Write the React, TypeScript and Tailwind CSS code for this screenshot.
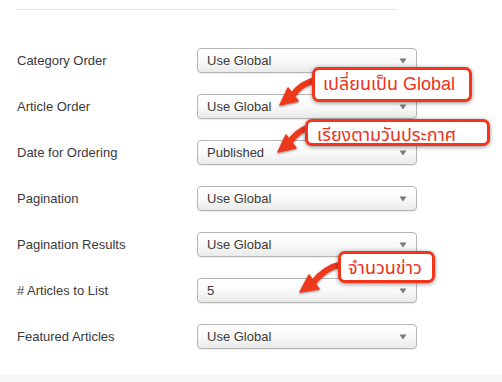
import React from 'react'

const rows = [
  { label: 'Category Order', value: 'Use Global' },
  { label: 'Article Order', value: 'Use Global' },
  { label: 'Date for Ordering', value: 'Published' },
  { label: 'Pagination', value: 'Use Global' },
  { label: 'Pagination Results', value: 'Use Global' },
  { label: '# Articles to List', value: '5' },
  { label: 'Featured Articles', value: 'Use Global' },
]

function FakeSelect({ value }: { value: string }) {
  return (
    <div className="w-[220px] h-[25px] rounded-[4px] border border-[#b5b5b5] bg-gradient-to-b from-white via-[#fafafa] to-[#e9e9e9] shadow-[0_1px_1px_rgba(0,0,0,0.08)] flex items-center justify-between pl-[9px] pr-[9px]">
      <span className="text-[13px] text-[#3a3a3a]">{value}</span>
      <svg width="8" height="6" viewBox="0 0 8 6">
        <polygon points="0.5,0.5 7.5,0.5 4,5.5" fill="#7a7a7a" />
      </svg>
    </div>
  )
}

function Callout({ text, className }: { text: string; className: string }) {
  return (
    <div
      className={
        'absolute bg-white border-[3px] border-[#f4331b] rounded-[7px] shadow-[0_1px_4px_rgba(0,0,0,0.45)] text-[#f0301a] text-[18px] leading-none overflow-hidden whitespace-nowrap ' +
        className
      }
    >
      {text}
    </div>
  )
}

export default function App() {
  return (
    <main
      className="relative w-[502px] h-[382px] bg-white overflow-hidden"
      style={{ fontFamily: '"Liberation Sans", Arial, "Noto Sans Thai", "Noto Sans", sans-serif' }}
    >
      <div className="pl-[17px] pt-[9px]">
        <div className="w-[380px] h-px bg-[#e6e6e6]" />

        <div className="flex flex-col gap-[21px] mt-[38px]">
          {rows.map((r) => (
            <div key={r.label} className="flex items-center">
              <div className="w-[180px] text-[13px] text-[#3a3a3a]">{r.label}</div>
              <FakeSelect value={r.value} />
            </div>
          ))}
        </div>
      </div>

      {/* faint band at page bottom */}
      <div className="absolute left-0 right-0 bottom-0 h-[7px] bg-[#f6f6f6]" />

      <svg className="absolute inset-0 pointer-events-none" width="502" height="382" viewBox="0 0 502 382">
        <defs>
          <filter id="sh" x="-20%" y="-20%" width="140%" height="140%">
            <feDropShadow dx="0" dy="1" stdDeviation="1.2" floodColor="#000" floodOpacity="0.45" />
          </filter>
        </defs>
        <g fill="#ee381b" stroke="#ee381b" filter="url(#sh)">
          <path d="M316 80 Q301 83 292 96" fill="none" strokeWidth="6" strokeLinecap="round" />
          <polygon points="280,105 298,101 288,88" strokeWidth="1.5" strokeLinejoin="round" />

          <path d="M309 127 Q297 131 289 143" fill="none" strokeWidth="6" strokeLinecap="round" />
          <polygon points="278,152 296,148 286,135" strokeWidth="1.5" strokeLinejoin="round" />

          <path d="M342 264 Q324 268 313 283" fill="none" strokeWidth="6" strokeLinecap="round" />
          <polygon points="300,292 319,289 309,275" strokeWidth="1.5" strokeLinejoin="round" />
        </g>
      </svg>

      <Callout text="เปลี่ยนเป็น Global" className="left-[312px] top-[67px] w-[160px] h-[35px] pl-[8px] pt-[5px]" />
      <Callout text="เรียงตามวันประกาศ" className="left-[305px] top-[119px] w-[185px] h-[27px] pl-[9px] pt-[4px]" />
      <Callout text="จำนวนข่าว" className="left-[338px] top-[251px] w-[97px] h-[32px] pl-[7px] pt-[5px]" />
    </main>
  )
}
